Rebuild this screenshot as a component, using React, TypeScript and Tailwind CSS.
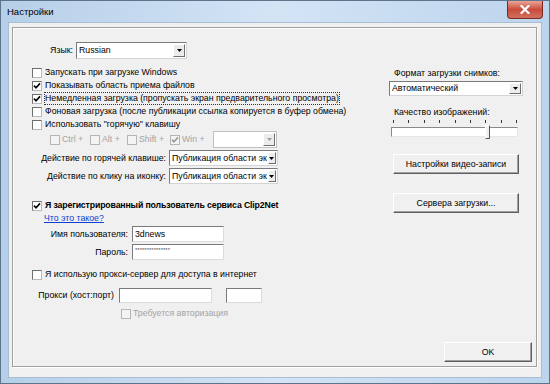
import React from "react";

function Check({ checked = false, disabled = false }: { checked?: boolean; disabled?: boolean }) {
  return (
    <span
      className={
        disabled
          ? "relative flex items-center justify-center w-[10px] h-[10px] shrink-0 border border-[#b5b5b5] bg-[#f4f4f4]"
          : "relative flex items-center justify-center w-[10px] h-[10px] shrink-0 border border-t-[#6f6f6f] border-l-[#6f6f6f] border-r-[#b9b9b9] border-b-[#b9b9b9] bg-white"
      }
    >
      {checked && (
        <svg width="8" height="8" viewBox="0 0 8 8">
          <path d="M1 3.6 L3 5.8 L7 1.4" fill="none" stroke={disabled ? "#9a9a9a" : "#000"} strokeWidth="1.6" />
        </svg>
      )}
    </span>
  );
}

function Combo({ text, className, disabled = false }: { text: string; className: string; disabled?: boolean }) {
  return (
    <div
      className={
        "flex items-stretch bg-white border border-t-[#7a7a7a] border-l-[#7a7a7a] border-r-[#d4d4d4] border-b-[#d4d4d4] " +
        className
      }
    >
      <div className="flex-1 flex items-center pl-[2px] whitespace-nowrap">{text}</div>
      <div className="w-[12px] m-[1px] flex items-center justify-center bg-[#ececec] border border-t-white border-l-white border-r-[#6e6e6e] border-b-[#6e6e6e]">
        <svg width="5" height="3" viewBox="0 0 5 3">
          <path d="M0 0 L5 0 L2.5 3 Z" fill={disabled ? "#a0a0a0" : "#000"} />
        </svg>
      </div>
    </div>
  );
}

function Input({ className, children }: { className: string; children?: React.ReactNode }) {
  return (
    <div
      className={
        "flex items-center pl-[2px] bg-white border border-t-[#7a7a7a] border-l-[#7a7a7a] border-r-[#dcdcdc] border-b-[#dcdcdc] " +
        className
      }
    >
      {children}
    </div>
  );
}

function Button({ children, className }: { children: React.ReactNode; className: string }) {
  return (
    <div
      className={
        "flex items-center justify-center bg-[#f0f0f0] border border-t-white border-l-white border-r-[#5f5f5f] border-b-[#5f5f5f] shadow-[inset_-1px_-1px_0_#a0a0a0] " +
        className
      }
    >
      {children}
    </div>
  );
}

export default function App() {
  const ticks = [0, 1, 2, 3, 4, 5, 6, 7, 8];
  return (
    <div className="w-[550px] h-[384px] flex flex-col relative overflow-hidden border border-[#5f738b] bg-gradient-to-r from-[#b6cfe9] via-[#d3e4f5] to-[#bcd4ed] font-['Liberation_Sans',Arial,sans-serif] text-[8.75px] leading-none text-black">
      {/* title bar */}
      <div className="h-[21px] flex items-center pl-[6px] text-[9.5px] text-black shrink-0">Настройки</div>
      <div className="absolute top-0 right-[6px] w-[36px] h-[18px] rounded-b-[4px] border border-[#7a2a22] border-t-0 bg-gradient-to-b from-[#e9a497] via-[#c94b3b] to-[#d0705e] flex items-center justify-center">
        <svg width="10" height="9" viewBox="0 0 10 9">
          <path d="M1.5 1 L8.5 8 M8.5 1 L1.5 8" stroke="#fff" strokeWidth="2.2" strokeLinecap="square" />
        </svg>
      </div>

      {/* body */}
      <div className="flex-1 mx-[7px] mb-[5px] bg-[#f0f0f0] border border-[#a9bdd3] flex flex-col">
        <div className="flex-1 mt-[4px] ml-[3px] mr-[4px] mb-[10px] border border-[#a0a0a0] shadow-[inset_1px_1px_0_#ffffff,1px_1px_0_#ffffff] flex flex-col">
          <div className="flex">
            {/* left column */}
            <div className="w-[376px] pl-[19px] flex flex-col">
              <div className="mt-[14px] h-[17px] flex items-center">
                <div className="w-[41px] text-right">Язык:</div>
                <Combo text="Russian" className="ml-[3px] w-[111px] h-[17px]" />
              </div>

              <div className="mt-[7px] h-[13px] flex items-center">
                <Check />
                <span className="ml-[3px]">Запускать при загрузке Windows</span>
              </div>
              <div className="h-[13px] flex items-center">
                <Check checked />
                <span className="ml-[3px]">Показывать область приема файлов</span>
              </div>
              <div className="h-[13px] flex items-center">
                <Check checked />
                <span className="ml-[2px] border border-dotted border-[#333] px-[0px] py-[1px]">
                  Немедленная загрузка (пропускать экран предварительного просмотра)
                </span>
              </div>
              <div className="h-[13px] flex items-center">
                <Check />
                <span className="ml-[3px]">Фоновая загрузка (после публикации ссылка копируется в буфер обмена)</span>
              </div>
              <div className="h-[13px] flex items-center">
                <Check />
                <span className="ml-[3px]">Использовать "горячую" клавишу</span>
              </div>

              <div className="h-[17px] flex items-center pl-[18px] text-[#a3a3a3]">
                <div className="w-[40px] flex items-center">
                  <Check disabled />
                  <span className="ml-[2px]">Ctrl +</span>
                </div>
                <div className="w-[37px] flex items-center">
                  <Check disabled />
                  <span className="ml-[2px]">Alt +</span>
                </div>
                <div className="w-[43px] flex items-center">
                  <Check disabled />
                  <span className="ml-[2px]">Shift +</span>
                </div>
                <div className="w-[43px] flex items-center">
                  <Check disabled checked />
                  <span className="ml-[2px]">Win +</span>
                </div>
                <Combo text="" disabled className="w-[64px] h-[17px] !border-[#c0c0c0]" />
              </div>

              <div className="mt-[2px] h-[16px] flex items-center">
                <div className="w-[134px] text-right whitespace-nowrap">Действие по горячей клавише:</div>
                <Combo text="Публикация области эк" className="ml-[3px] w-[109px] h-[16px]" />
              </div>
              <div className="mt-[2px] h-[16px] flex items-center">
                <div className="w-[134px] text-right whitespace-nowrap">Действие по клику на иконку:</div>
                <Combo text="Публикация области эк" className="ml-[3px] w-[109px] h-[16px]" />
              </div>

              <div className="mt-[15px] h-[13px] flex items-center">
                <Check checked />
                <span className="ml-[3px] font-bold tracking-[-0.15px]">Я зарегистрированный пользователь сервиса Clip2Net</span>
              </div>
              <div className="h-[12px] flex items-center pl-[12px]">
                <span className="text-[#0b3fd6] underline">Что это такое?</span>
              </div>

              <div className="mt-[2px] h-[16px] flex items-center">
                <div className="w-[96px] text-right whitespace-nowrap">Имя пользователя:</div>
                <Input className="ml-[4px] w-[92px] h-[16px]">3dnews</Input>
              </div>
              <div className="mt-[2px] h-[16px] flex items-center">
                <div className="w-[96px] text-right whitespace-nowrap">Пароль:</div>
                <Input className="ml-[4px] w-[92px] h-[16px] !items-start pt-[2px] text-[6px] tracking-[0px] text-[#555]">
                  ***************
                </Input>
              </div>

              <div className="mt-[8px] h-[13px] flex items-center">
                <Check />
                <span className="ml-[3px]">Я использую прокси-сервер для доступа в интернет</span>
              </div>
              <div className="mt-[7px] h-[15px] flex items-center">
                <div className="w-[82px] text-right whitespace-nowrap">Прокси (хост:порт)</div>
                <Input className="ml-[5px] w-[93px] h-[15px]" />
                <Input className="ml-[14px] w-[36px] h-[15px]" />
              </div>
              <div className="mt-[4px] h-[13px] flex items-center pl-[89px] text-[#a3a3a3]">
                <Check disabled />
                <span className="ml-[2px]">Требуется авторизация</span>
              </div>
            </div>

            {/* right column */}
            <div className="flex flex-col">
              <div className="mt-[39px] h-[12px] flex items-center pl-[5px]">Формат загрузки снимков:</div>
              <Combo text="Автоматический" className="mt-[2px] w-[134px] h-[15px]" />
              <div className="mt-[10px] h-[12px] flex items-center pl-[5px]">Качество изображений:</div>
              <div className="mt-[2px] ml-[4px] w-[124px] h-[3px] flex justify-between">
                {ticks.map((t) => (
                  <div key={t} className="w-[1px] h-[3px] bg-[#333]" />
                ))}
              </div>
              <div className="mt-[4px] ml-[2px] w-[127px] h-[10px] relative bg-white border border-t-[#8a8a8a] border-l-[#8a8a8a] border-r-[#e6e6e6] border-b-[#e6e6e6]">
                <div className="absolute left-[93px] top-[-3px] w-[5px] h-[14px] bg-[#f0f0f0] border border-t-white border-l-white border-r-[#555] border-b-[#555]" />
              </div>
              <Button className="mt-[17px] ml-[4px] w-[126px] h-[20px]">Настройки видео-записи</Button>
              <Button className="mt-[19px] ml-[4px] w-[126px] h-[20px]">Сервера загрузки...</Button>
            </div>
          </div>
          <div className="flex-1" />
          <div className="flex justify-end mr-[4px] mb-[4px]">
            <Button className="w-[88px] h-[20px]">OK</Button>
          </div>
        </div>
      </div>
    </div>
  );
}
